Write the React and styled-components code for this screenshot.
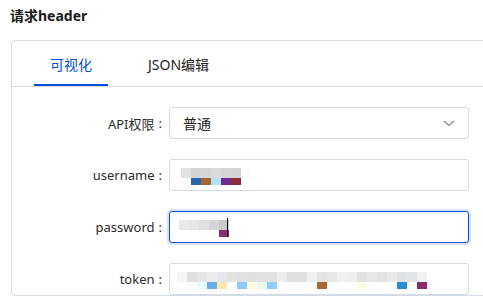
import styled, {createGlobalStyle} from "styled-components";

const GlobalStyle = createGlobalStyle`
  html, body {
    margin: 0;
    padding: 0;
    background: #fff;
    overflow: hidden;
  }
  body {
    font-family: "Noto Sans", "Noto Sans CJK SC", sans-serif;
    color: #1f1f1f;
  }
`;

const Page = styled.div`
  width: 483px;
  height: 308px;
  overflow: hidden;
  padding: 6px 0 0 11px;
  box-sizing: border-box;
`;

const Title = styled.div`
  height: 20px;
  line-height: 20px;
  font-size: 14px;
  font-weight: 700;
  color: #1a1a1a;
  margin-left: -1px;
  margin-bottom: 14px;
`;

const Card = styled.div`
  width: 520px;
  border: 1px solid #d4dae6;
  border-radius: 4px;
  box-sizing: border-box;
`;

const TabBar = styled.div`
  display: flex;
  gap: 24px;
  padding-left: 22px;
  height: 45px;
  border-bottom: 1px solid #d4dae6;
`;

const Tab = styled.div`
  position: relative;
  padding: 0 16px;
  display: flex;
  align-items: center;
  font-size: 14px;
  color: ${p => (p.$active ? "#0052d9" : "#222")};

  &::after {
    content: "";
    display: ${p => (p.$active ? "block" : "none")};
    position: absolute;
    left: 0;
    right: 0;
    bottom: 0;
    height: 2px;
    background: #0052d9;
  }
`;

const Form = styled.div`
  display: grid;
  grid-template-columns: 150px 300px;
  column-gap: 7px;
  row-gap: 20px;
  padding-top: 20px;
`;

const Label = styled.div`
  display: flex;
  align-items: center;
  justify-content: flex-end;
  font-size: 13px;
  color: #2b2b2b;
  height: 32px;
`;

const Colon = styled.span`
  margin-left: 4px;
`;

const Field = styled.div`
  position: relative;
  height: 32px;
  box-sizing: border-box;
  border: 1px solid ${p => (p.$focused ? "#0052d9" : "#d4dae6")};
  box-shadow: ${p => (p.$focused ? "0 0 0 2px #d9e1ff" : "none")};
  border-radius: 3px;
  display: flex;
  align-items: center;
  padding: 0 12px 0 13px;
  font-size: 14px;
  color: #222;
`;

const SelectText = styled.span`
  flex: 1;
`;

const Mosaic = styled.div`
  display: grid;
  grid-template-columns: repeat(${p => p.$cols}, 10px);
  grid-template-rows: 10px 7px;
  margin-top: ${p => p.$top}px;
  margin-left: ${p => p.$left}px;
`;

const Cell = styled.div`
  background: ${p => p.$c};
`;

const Caret = styled.div`
  position: absolute;
  width: 1px;
  height: 19px;
  background: #111;
  left: ${p => p.$x}px;
  top: 6px;
`;

const Chevron = () => (
  <svg width="14" height="14" viewBox="0 0 14 14">
    <polyline points="2,5 7,9.5 12,5" fill="none" stroke="#8a8a8a" strokeWidth="1.2"/>
  </svg>
);

const MosaicBlock = ({top, bottom, left = 0, offset = 0}) => (
  <Mosaic $cols={top.length} $left={left} $top={offset}>
    {top.map((c, i) => <Cell key={"t" + i} $c={c}/>)}
    {bottom.map((c, i) => <Cell key={"b" + i} $c={c}/>)}
  </Mosaic>
);

const W = "transparent";

const userTop = ["#e3e2df", "#d3d4d7", "#d6d6d9", "#dcdbda", "#d6d6d9", "#d3d4d7", "#fbfcfb"];
const userBottom = [W, "#2a67b1", "#a8642f", "#aee4f9", "#6b2c91", "#8b2c3a", W];

const passTop = ["#e9e9e9", "#e6e6e6", "#e0e0e0", "#d6d6d6", "#c9cacc"];
const passBottom = [W, W, W, W, "#8b2d6a"];

const tokenTop = [
  "#f5f5f5", "#e0e0e0", "#e6e6e6", "#ececec", "#e5e7ea", "#e4e2e1", "#e0e1e3", "#e0e0e0",
  "#e3e1df", "#e1e1e1", "#ededed", "#e0e0e0", "#e0e0e0", "#f0f0f0", "#e4e4e4", "#e6e7e8",
  "#f0f0f0", "#efefef", "#e2e1df", "#e6e8e8", "#e3e2e2", "#e9e9e8", "#dfe2e5", "#e4e4e4", "#f1f1f5",
];
const tokenBottom = [
  W, W, "#e8fbfd", "#6aaee9", "#ffe6b0", W, "#8dc8f8", "#fefbe5",
  "#e8fbe8", "#8dcdfc", W, W, W, W, "#a96733", W,
  W, W, "#fdfde4", W, W, W, "#2b8bd4", W, "#8a2b6a",
];

const App = () => {
  return (
    <Page>
      <GlobalStyle/>
      <Title>请求header</Title>
      <Card>
        <TabBar>
          <Tab $active>可视化</Tab>
          <Tab>JSON编辑</Tab>
        </TabBar>
        <Form>
          <Label>API权限<Colon>:</Colon></Label>
          <Field>
            <SelectText>普通</SelectText>
            <Chevron/>
          </Field>

          <Label>username<Colon>:</Colon></Label>
          <Field>
            <MosaicBlock top={userTop} bottom={userBottom} left={-2} offset={3}/>
          </Field>

          <Label>password<Colon>:</Colon></Label>
          <Field $focused>
            <MosaicBlock top={passTop} bottom={passBottom} left={-4} offset={3}/>
            <Caret $x={57}/>
          </Field>

          <Label>token<Colon>:</Colon></Label>
          <Field>
            <MosaicBlock top={tokenTop} bottom={tokenBottom} left={-6} offset={3}/>
          </Field>
        </Form>
      </Card>
    </Page>
  );
};

export default App;
